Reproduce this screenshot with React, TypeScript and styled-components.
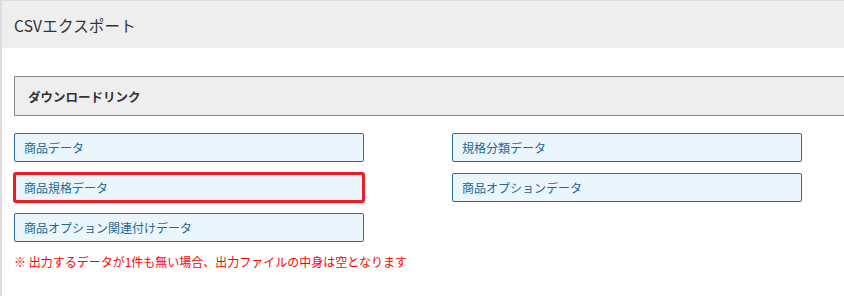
import styled, { createGlobalStyle } from "styled-components";

const GlobalStyle = createGlobalStyle`
  html, body {
    margin: 0;
    padding: 0;
    background: #fff;
    overflow: hidden;
  }
  body {
    font-family: "Noto Sans CJK JP", "Noto Sans", sans-serif;
    color: #333;
  }
`;

const links = [
  { label: "商品データ" },
  { label: "規格分類データ" },
  { label: "商品規格データ", highlighted: true },
  { label: "商品オプションデータ" },
  { label: "商品オプション関連付けデータ" },
];

export default function App() {
  return (
    <>
      <GlobalStyle />
      <Panel>
        <PanelHeader>CSVエクスポート</PanelHeader>
        <PanelBody>
          <SectionBox>ダウンロードリンク</SectionBox>
          <LinkGrid>
            {links.map((l) => (
              <LinkButton
                key={l.label}
                href="#"
                $highlighted={!!l.highlighted}
              >
                {l.label}
              </LinkButton>
            ))}
          </LinkGrid>
          <Note>※ 出力するデータが1件も無い場合、出力ファイルの中身は空となります</Note>
        </PanelBody>
      </Panel>
    </>
  );
}

const Panel = styled.section`
  width: 844px;
  height: 296px;
  box-sizing: border-box;
  border-top: 1px solid #dddddd;
  border-left: 2px solid #dddddd;
  overflow: hidden;
`;

const PanelHeader = styled.h1`
  margin: 0;
  height: 47px;
  padding-left: 12px;
  display: flex;
  align-items: center;
  background: #eeeeee;
  font-size: 15.5px;
  font-weight: normal;
  letter-spacing: 0.2px;
  color: #333;
`;

const PanelBody = styled.div`
  padding: 28px 0 0 12px;
`;

const SectionBox = styled.h2`
  margin: 0 -2px 0 0;
  box-sizing: border-box;
  height: 40px;
  padding-left: 13px;
  display: flex;
  align-items: center;
  background: #eeeeee;
  border: 1px solid #888888;
  border-right: none;
  font-size: 12.5px;
  font-weight: bold;
  color: #333;
`;

const LinkGrid = styled.div`
  display: grid;
  grid-template-columns: 350px 350px;
  column-gap: 88px;
  row-gap: 11px;
  margin-top: 17px;
`;

const LinkButton = styled.a<{ $highlighted: boolean }>`
  box-sizing: border-box;
  height: 29px;
  padding-left: 9px;
  display: flex;
  align-items: center;
  background: #eaf5fc;
  border: 1px solid #2b6f98;
  border-radius: 2px;
  font-size: 12px;
  color: #1d6a95;
  text-decoration: none;
  outline: ${(p) => (p.$highlighted ? "3px solid #ee1c25" : "none")};
  outline-offset: -2px;
`;

const Note = styled.p`
  margin: 11px 0 0 0;
  font-size: 12px;
  line-height: 18px;
  color: #ff0000;
`;
